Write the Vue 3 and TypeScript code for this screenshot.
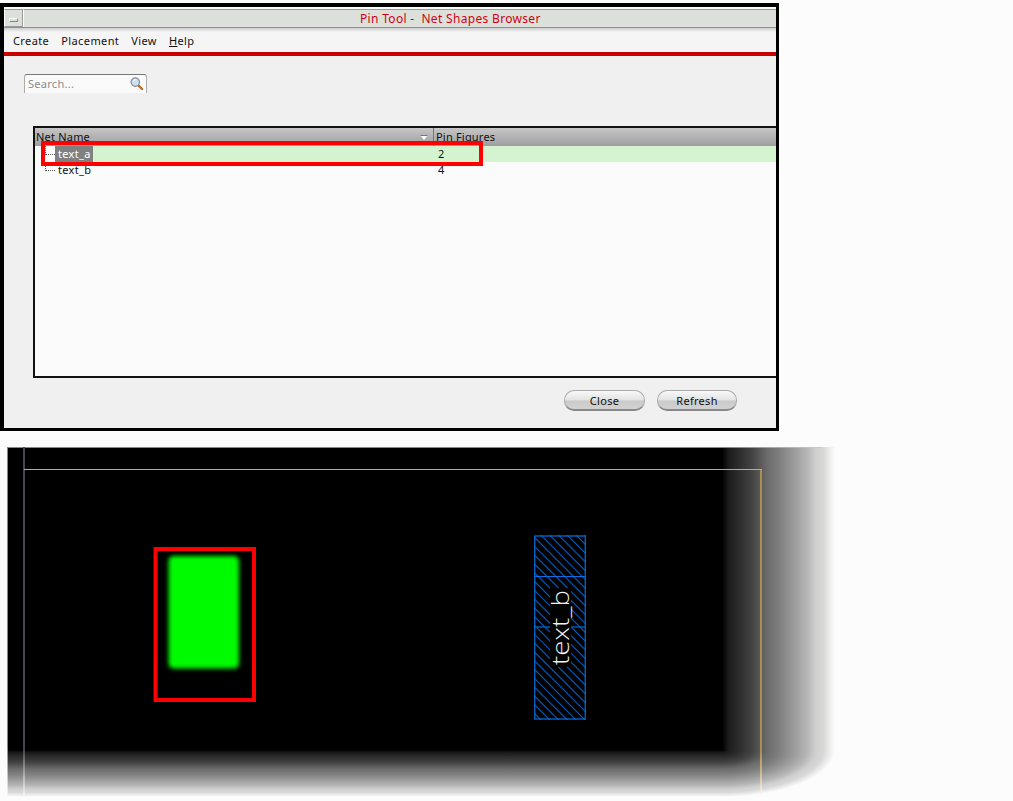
<script setup lang="ts">
const menus = ['Create', 'Placement', 'View']
const nets = [
  { name: 'text_a', figures: 2, selected: true },
  { name: 'text_b', figures: 4, selected: false },
]
const actions = ['Close', 'Refresh']
const hatch = Array.from({ length: 27 }, (_, i) => -178 + i * 8.8)
</script>

<template>
  <main class="page">
    <section class="window">
      <header class="titlebar">
        <span class="sysmenu"><i></i></span>
        <h1>Pin Tool -&nbsp; Net Shapes Browser</h1>
      </header>
      <nav class="menubar">
        <span v-for="m in menus" :key="m">{{ m }}</span>
        <span><u>H</u>elp</span>
      </nav>
      <div class="body">
        <div class="search">
          <span>Search...</span>
          <svg width="14" height="14" viewBox="0 0 14 14">
            <path d="M8.5 8.5L12 12" stroke="#b96a20" stroke-width="2.4" stroke-linecap="round" />
            <circle cx="5.3" cy="5.1" r="4.2" fill="#cbdff2" stroke="#858b98" stroke-width="1.2" />
            <path d="M3 4.5Q4 2.5 6 2.6" stroke="#fff" fill="none" />
          </svg>
        </div>
        <div class="table">
          <div class="thead">
            <span class="first">Net Name<i class="sort"></i></span>
            <span class="second">Pin Figures</span>
          </div>
          <div v-for="n in nets" :key="n.name" class="row" :class="{ selected: n.selected }">
            <span class="branch"></span>
            <span class="name"><b>{{ n.name }}</b></span>
            <span class="count">{{ n.figures }}</span>
          </div>
          <div class="marker"></div>
        </div>
        <footer>
          <button v-for="a in actions" :key="a" type="button">{{ a }}</button>
        </footer>
      </div>
    </section>

    <section class="canvas">
      <svg width="829" height="351" viewBox="7 447 829 351">
        <defs>
          <filter id="soft" x="-20%" y="-20%" width="140%" height="140%">
            <feGaussianBlur stdDeviation="2" />
          </filter>
          <linearGradient id="gridFade" gradientUnits="userSpaceOnUse" x1="0" y1="750" x2="0" y2="797">
            <stop offset="0" stop-color="#46464d" />
            <stop offset=".5" stop-color="#aaa" />
            <stop offset="1" stop-color="#fcfcfc" />
          </linearGradient>
          <linearGradient id="edgeFade" gradientUnits="userSpaceOnUse" x1="0" y1="750" x2="0" y2="796">
            <stop offset="0" stop-color="#ab8d50" />
            <stop offset=".45" stop-color="#c8b48a" />
            <stop offset="1" stop-color="#fcfaf6" />
          </linearGradient>
        </defs>
        <rect x="23" y="447" width="2" height="350" fill="url(#gridFade)" />
        <rect x="760" y="469" width="2" height="327" fill="url(#edgeFade)" />
        <rect x="24" y="469" width="738" height="1" fill="#ffa500" />

        <rect x="168.5" y="556" width="70.5" height="112.5" rx="5" fill="#00fa00" filter="url(#soft)" />
        <rect x="173" y="560" width="61" height="104" fill="#00fa00" />
        <rect x="155.5" y="549" width="98.5" height="151" fill="none" stroke="#f00" stroke-width="4" />

        <svg x="534" y="535" width="52" height="185" viewBox="0 0 52 185">
          <path v-for="c in hatch" :key="c" :d="`M0 ${-c}L52 ${52 - c}`" stroke="#005cc0" stroke-width="1.1" />
          <path d="M0 92H52" stroke="#0058b8" stroke-width="1.5" />
          <rect x="16" y="53" width="21" height="79" fill="#000" />
          <path d="M0 41.5H52" stroke="#0870e8" />
          <rect x=".75" y="1" width="50.5" height="183" fill="none" stroke="#0768d4" stroke-width="1.3" />
        </svg>
        <text class="label" transform="translate(569 665) rotate(-90)" textLength="75" lengthAdjust="spacingAndGlyphs">text_b</text>
      </svg>
    </section>
  </main>
</template>

<style>
html,
body {
  background: #fcfcfc;
  overflow: hidden;
}
</style>

<style scoped>
* {
  box-sizing: border-box;
}
.page {
  width: 1013px;
  height: 801px;
  padding-top: 3px;
  background: #fcfcfc;
  font: 11px/16px 'Noto Sans', 'Open Sans', sans-serif;
  letter-spacing: 0.2px;
  color: #111;
}
.window {
  width: 779px;
  height: 428px;
  border: solid #000;
  border-width: 4px 3px 3px 4px;
  background: #f1f0f1;
  overflow: hidden;
}
.titlebar {
  display: flex;
  height: 21px;
  border-top: 2px solid #fcfcfc;
  border-bottom: 1px solid #909090;
  background: #dce0db;
}
.sysmenu {
  width: 19px;
  border: 1px solid #999;
  border-left-color: #fff;
  padding: 8px 0 0 4px;
}
.sysmenu i {
  display: block;
  width: 9px;
  height: 4px;
  border: 1px solid #fff;
  border-right-color: #888;
  border-bottom-color: #888;
}
h1 {
  flex: 1;
  margin: 0;
  border-top: 1px solid #999;
  border-left: 1px solid #fff;
  padding-left: 336px;
  font-size: 12px;
  font-weight: 400;
  line-height: 18px;
  letter-spacing: 0.32px;
  color: #d00010;
  white-space: nowrap;
}
.menubar {
  display: flex;
  gap: 12px;
  height: 28px;
  padding: 5px 9px 0;
  border-bottom: 4px solid #c80000;
  background: linear-gradient(#ccc, #f6f5f6 4px);
  letter-spacing: 0.4px;
}
.body {
  padding-top: 18px;
}
.search {
  display: flex;
  justify-content: space-between;
  width: 123px;
  height: 19px;
  margin-left: 20px;
  padding: 1px 2px 0 3px;
  border: 1px solid #aaa;
  border-top-color: #777;
  border-bottom: 0;
  border-radius: 3px 3px 0 0;
  background: #fafafa;
  color: #8b8b8b;
  letter-spacing: 0.28px;
}
.search svg {
  margin-top: 1px;
}
.table {
  position: relative;
  height: 252px;
  margin: 33px 0 0 29px;
  border: 2px solid #111;
  border-right: 0;
  background: #fbfbfb;
}
.thead {
  display: flex;
  height: 18px;
  line-height: 18px;
  background: linear-gradient(#c6c6c6, #9f9da0);
}
.first {
  display: flex;
  justify-content: space-between;
  width: 399px;
  padding: 0 5px 0 1px;
  border-right: 1px solid #777;
}
.sort {
  margin-top: 7px;
  width: 8px;
  height: 5px;
  border-top: 1px solid #777;
  background: #fff;
  clip-path: polygon(0 0, 100% 0, 50% 100%);
}
.second {
  padding-left: 2px;
}
.row {
  display: flex;
  height: 16px;
}
.branch {
  width: 10px;
  height: 9px;
  margin-left: 10px;
  border-left: 1px dotted #555;
  border-bottom: 1px dotted #555;
}
.name {
  width: 380px;
}
.name b {
  display: inline-block;
  height: 16px;
  padding: 0 2px 0 3px;
  font-weight: 400;
  letter-spacing: 0.3px;
}
.count {
  flex: 1;
  padding-left: 3px;
}
.selected .name,
.selected .count {
  background: #d4f4cf;
}
.selected b {
  background: #808080;
  color: #fff;
}
.marker {
  position: absolute;
  left: 6px;
  top: 13px;
  width: 442px;
  height: 25px;
  border: 4px solid #f00;
}
footer {
  display: flex;
  justify-content: flex-end;
  gap: 12px;
  padding: 12px 39px 0 0;
}
button {
  width: 81px;
  height: 21px;
  padding: 2px 0 0;
  border: 1px solid #aaa;
  border-bottom: 2px solid #888;
  border-radius: 10px;
  background: linear-gradient(#f8f8f8, #e2e4e2 50%, #cacaca 55%, #d2d2d2);
  font: inherit;
  letter-spacing: 0.3px;
  color: #111;
}
button:last-child {
  width: 80px;
}
.canvas {
  width: 829px;
  height: 351px;
  margin: 16px 0 0 7px;
  background:
    linear-gradient(90deg, #888 720px, #ccc) 0 0 / 816px 1px no-repeat,
    linear-gradient(#888 300px, #fcfcfc) 0 0 / 1px 351px no-repeat,
    radial-gradient(113px 47px at 0 0, #000 0, #1c1c1c 6%, #444 27%, #6b6b6b 40%, #7d7d7d 50%, #939393 60%, #b5b5b5 75%, #cfcfcf 83%, #d8d9d7 90%, #e8e7e8 94%, #fcfcfc 100%) 715px 303px / 114px 48px no-repeat,
    linear-gradient(90deg, #000 0, #1c1c1c 6%, #444 27%, #6b6b6b 40%, #7d7d7d 50%, #939393 60%, #b5b5b5 75%, #cfcfcf 83%, #d8d9d7 90%, #e8e7e8 94%, #fcfcfc 100%) 715px 0 / 113px 303px no-repeat,
    linear-gradient(#000 0, #1c1c1c 6%, #444 27%, #6b6b6b 40%, #7d7d7d 50%, #939393 60%, #b5b5b5 75%, #cfcfcf 83%, #d8d9d7 90%, #e8e7e8 94%, #fcfcfc 100%) 0 303px / 715px 47px no-repeat,
    linear-gradient(#000, #000) 0 0 / 715px 303px no-repeat;
}
.canvas svg {
  display: block;
}
.label {
  font: 300 24px 'Open Sans', 'Noto Sans', sans-serif;
  letter-spacing: 0;
  fill: #f4f4f4;
}
</style>
